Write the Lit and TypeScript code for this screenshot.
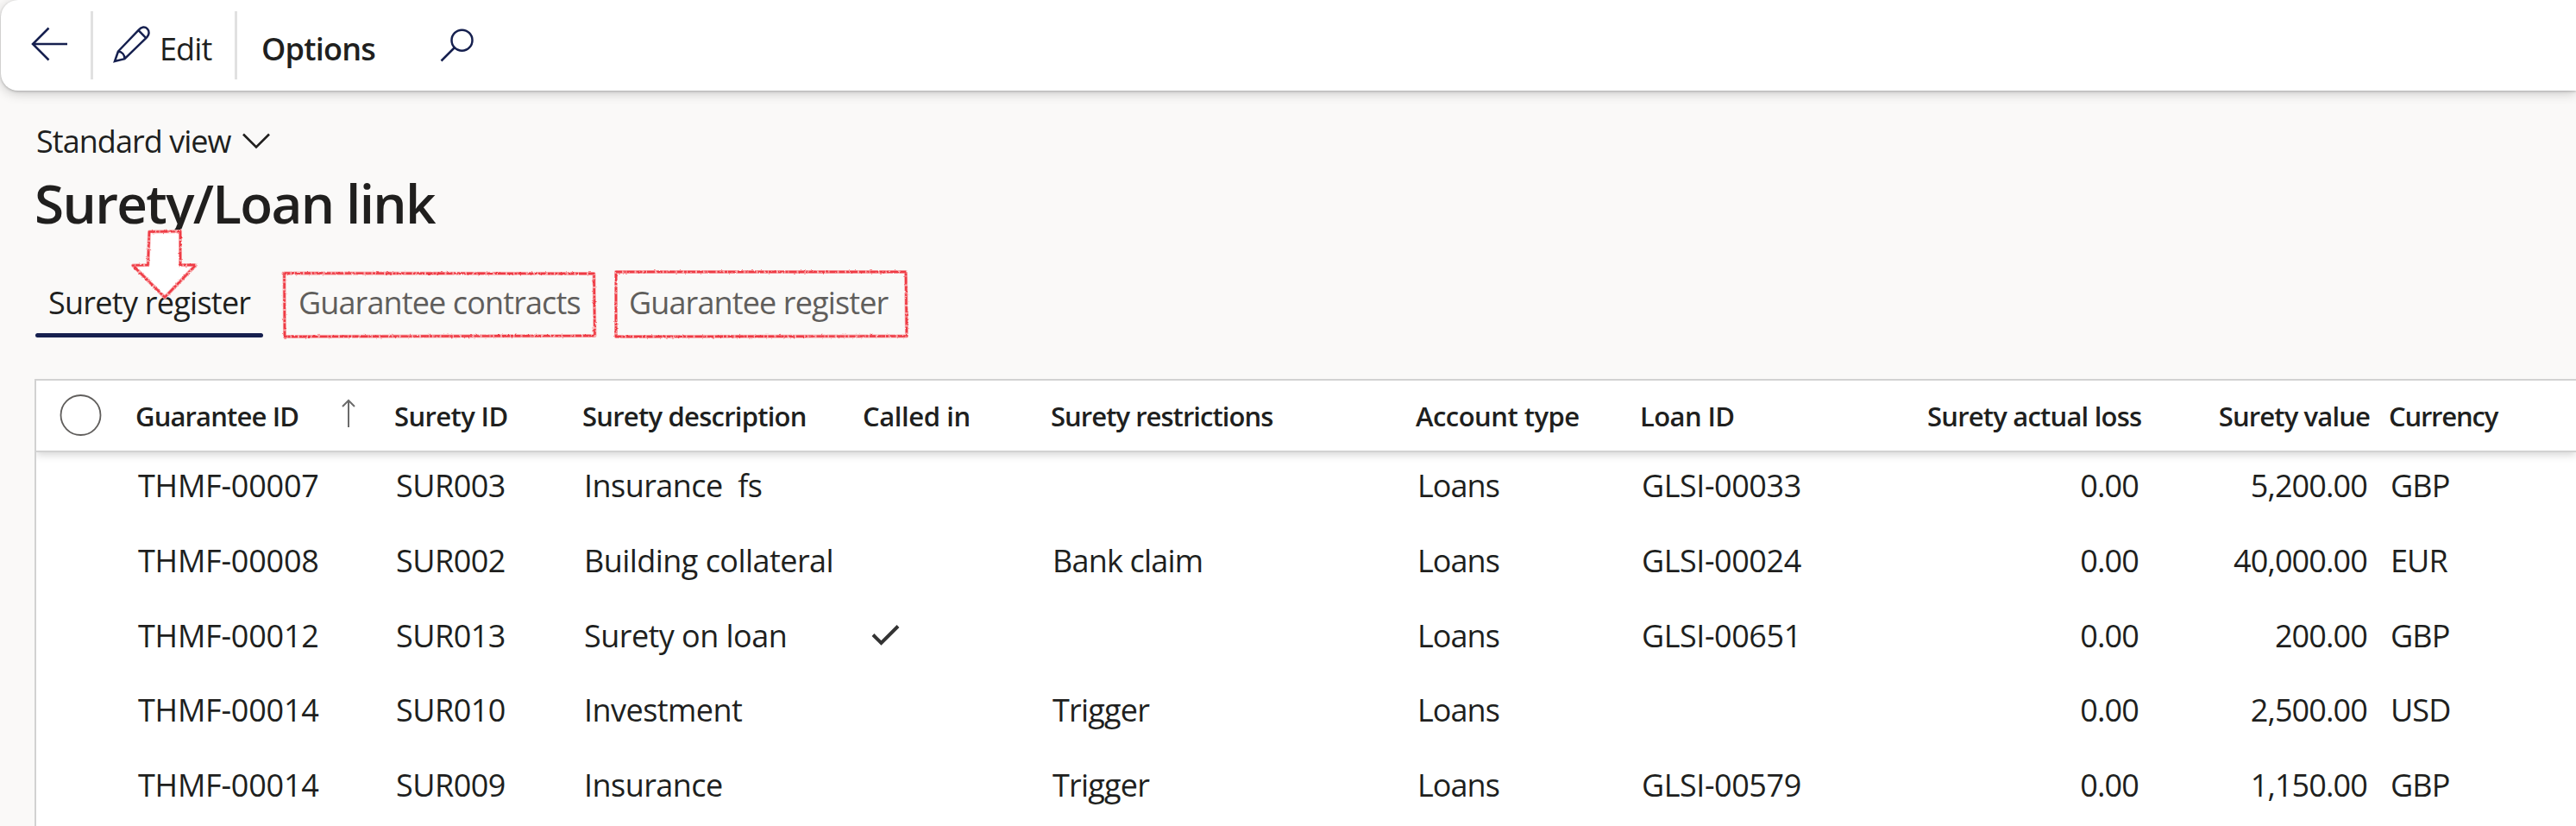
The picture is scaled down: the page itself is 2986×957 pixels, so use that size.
import { LitElement, html, css, svg, nothing } from "lit";

type Column = { key: string; title: string; cls: string };

const COLUMNS: Column[] = [
  { key: "guarantee", title: "Guarantee ID", cls: "guarantee" },
  { key: "surety", title: "Surety ID", cls: "surety" },
  { key: "description", title: "Surety description", cls: "description" },
  { key: "called", title: "Called in", cls: "called" },
  { key: "restrictions", title: "Surety restrictions", cls: "restrictions" },
  { key: "account", title: "Account type", cls: "account" },
  { key: "loan", title: "Loan ID", cls: "loan" },
  { key: "loss", title: "Surety actual loss", cls: "loss" },
  { key: "value", title: "Surety value", cls: "value" },
  { key: "currency", title: "Currency", cls: "currency" },
];

const row = (
  guarantee: string, surety: string, description: string, called: boolean,
  restrictions: string, loan: string, value: string, currency: string,
) => ({ guarantee, surety, description, called, restrictions, account: "Loans", loan, loss: "0.00", value, currency });

const ROWS: Record<string, string | boolean>[] = [
  row("THMF-00007", "SUR003", "Insurance  fs", false, "", "GLSI-00033", "5,200.00", "GBP"),
  row("THMF-00008", "SUR002", "Building collateral", false, "Bank claim", "GLSI-00024", "40,000.00", "EUR"),
  row("THMF-00012", "SUR013", "Surety on loan", true, "", "GLSI-00651", "200.00", "GBP"),
  row("THMF-00014", "SUR010", "Investment", false, "Trigger", "", "2,500.00", "USD"),
  row("THMF-00014", "SUR009", "Insurance", false, "Trigger", "GLSI-00579", "1,150.00", "GBP"),
];

class CommandBar extends LitElement {
  static styles = css`
    :host { display: block; position: relative; z-index: 1; }
    .bar {
      display: flex; align-items: flex-start; height: 105px; margin-left: 1px;
      background: #fff; border-radius: 20px 0 0 20px; color: #201f1e;
      box-shadow: 0 3px 14px rgba(0, 0, 0, 0.2), 0 1px 3px rgba(0, 0, 0, 0.22);
      font-size: 36px; line-height: 114px; white-space: pre;
    }
    svg { display: block; flex: none; fill: none; stroke: #16204f; stroke-width: 2.5; }
    .back { margin: 28px 25px 0 35px; }
    .sep { flex: none; width: 3px; height: 79px; margin-top: 13px; background: #e1e1e1; }
    .pencil { margin: 28px 9px 0 22px; }
    .edit { width: 87px; letter-spacing: -0.9px; }
    .options { width: 205px; padding-left: 28px; font-weight: 600; letter-spacing: -0.75px; }
    .search { margin-top: 30px; }
  `;
  render() {
    return html`<div class="bar">
      <svg class="back" width="44" height="46" viewBox="36 28 44 46"><path d="M56.500 32.500 38 51 56.500 69.500M38 51H78"/></svg>
      <div class="sep"></div>
      <svg class="pencil" width="46" height="46" viewBox="130 28 46 46">
        <path d="M137 59.500 161.300 34.200C164 31.200 168 30.600 170.800 33.300 173.500 36 173 40.300 170.300 43.200L144.500 68.200 133 71Z M160.500 35.200 169.300 44.200 M137 59.500C141.500 60 144.500 63.500 144.500 68.200"/>
      </svg>
      <span class="edit">Edit</span>
      <div class="sep"></div>
      <span class="options">Options</span>
      <svg class="search" width="44" height="44" viewBox="508 30 44 44"><circle cx="535.500" cy="46.700" r="12"/><path d="M526.500 55.500 511.500 70.500"/></svg>
    </div>`;
  }
}
customElements.define("command-bar", CommandBar);

class TabStrip extends LitElement {
  static styles = css`
    :host { display: block; }
    .tabs { display: flex; height: 71px; font-size: 36px; line-height: 62px; color: #605e5c; white-space: pre; }
    .tab { box-sizing: border-box; padding-left: 15px; letter-spacing: -0.88px; }
    .active { width: 264px; margin-right: 26px; color: #201f1e; letter-spacing: -0.74px; }
    .active::after { content: ""; display: block; height: 5px; margin: 4px 0 0 -15px; border-radius: 3px; background: #16204f; }
    .contracts { width: 361px; margin-right: 22px; }
  `;
  render() {
    return html`<div class="tabs">
      <div class="tab active">Surety register</div>
      <div class="tab contracts">Guarantee contracts</div>
      <div class="tab">Guarantee register</div>
    </div>`;
  }
}
customElements.define("tab-strip", TabStrip);

class SuretyGrid extends LitElement {
  static styles = css`
    :host { display: block; }
    .grid { height: 516px; border: solid #d2d2d2; border-width: 2px 0 0 2px; background: #fff; color: #201f1e; }
    .line {
      display: grid; white-space: pre;
      grid-template-columns: 115px 300px 218px 325px 218px 423px 260px 333px 248px 265px 1fr;
    }
    .head {
      height: 81px; line-height: 83px; font-size: 31px; font-weight: 600;
      border-bottom: 2px solid #d2d2d2; box-shadow: 0 3px 9px rgba(0, 0, 0, 0.17); clip-path: inset(0 0 -20px 0);
    }
    .row { height: 86.75px; line-height: 78px; font-size: 36px; }
    .cell { min-width: 0; }
    .row .cell { padding-left: 2px; }
    .pick, .arrow, .check { display: block; fill: none; }
    .pick { margin: 16px 0 0 27px; stroke: #605e5c; stroke-width: 1.8; }
    .guarantee { display: flex; }
    .arrow { margin: 21px 0 0 50px; stroke: #6b6b6b; stroke-width: 2; }
    .check { margin: 24px 0 0 7px; stroke: #333; stroke-width: 4; }
    .head .guarantee { letter-spacing: -0.86px; }
    .head .surety { letter-spacing: -0.62px; }
    .head .description { letter-spacing: -0.76px; }
    .head .called { letter-spacing: -0.4px; }
    .head .restrictions { letter-spacing: -0.96px; }
    .head .account { letter-spacing: -0.52px; }
    .head .loan { letter-spacing: -0.6px; }
    .head .loss { letter-spacing: -0.8px; }
    .head .value { letter-spacing: -0.87px; }
    .head .currency { letter-spacing: -1.2px; }
    .row .guarantee { letter-spacing: -0.22px; padding-left: 3px; }
    .row .surety { letter-spacing: -0.5px; }
    .row .description { letter-spacing: -0.55px; }
    .row .restrictions { letter-spacing: -0.8px; }
    .row .account { letter-spacing: -0.95px; }
    .row .loan { letter-spacing: -0.45px; }
    .row .loss, .row .value { letter-spacing: -0.88px; padding-right: 3px; }
    .loss, .value { text-align: right; }
    .loss { grid-column: 9; }
    .head .currency { padding-left: 22px; }
    .row .currency { padding-left: 24px; letter-spacing: -0.9px; }
  `;
  cell(col: Column, value: string | boolean) {
    if (col.key !== "called") return value;
    return value
      ? html`<svg class="check" width="36" height="26" viewBox="1009 721 36 26"><path d="M1012 734.500 1021.500 744 1041 724.500"/></svg>`
      : nothing;
  }
  render() {
    return html`<div class="grid">
      <div class="line head">
        <svg class="pick" width="50" height="50" viewBox="0 0 50 50"><circle cx="24.500" cy="24" r="23"/></svg>
        ${COLUMNS.map((c) => html`<div class="cell ${c.cls}"><span>${c.title}</span>${c.key === "guarantee"
          ? html`<svg class="arrow" width="16" height="34" viewBox="0 0 16 34"><path d="M8 33V2M1 9 8 2 15 9"/></svg>`
          : nothing}</div>`)}
      </div>
      ${ROWS.map((r) => html`<div class="line row">
        <div></div>${COLUMNS.map((c) => html`<div class="cell ${c.cls}">${this.cell(c, r[c.key])}</div>`)}
      </div>`)}
    </div>`;
  }
}
customElements.define("surety-grid", SuretyGrid);

const MARKS = [
  "M329.500 316.500 688.500 317 689.500 389 330 390Z",
  "M714 315 1050 315 1051 389.500 714 390Z",
];
const ARROW = "M173 268.500 209 268V307H227L191 344.500 154 307.500 171.500 307Z";

class AppRoot extends LitElement {
  static styles = css`
    :host {
      display: block; position: relative; height: 957px; overflow: hidden;
      background: #faf9f8; color: #201f1e; font-family: "Open Sans", "Noto Sans", sans-serif;
    }
    .page { padding: 28px 0 0 41px; }
    .view { display: flex; align-items: flex-start; height: 60px; padding-left: 1px; font-size: 36px; line-height: 62px; letter-spacing: -0.96px; }
    .chevron { display: block; margin: 20px 0 0 13px; fill: none; stroke: #201f1e; stroke-width: 2.6; }
    .title { margin: 2px 0 45px -1px; font-size: 62px; font-weight: 600; line-height: 80px; letter-spacing: -1.65px; }
    .grid { margin: 48px 0 0 -1px; }
    .marks { position: absolute; left: 0; top: 0; z-index: 2; pointer-events: none; stroke-linejoin: round; }
    .wash { fill: none; stroke: #f9a9ab; stroke-width: 4; }
    .ink { fill: none; stroke: #ee3a44; stroke-width: 2.4; stroke-dasharray: 7 1.5 3 1 9 2; }
    .arrow { fill: #fff; }
  `;
  render() {
    return html`
      <command-bar></command-bar>
      <div class="page">
        <div class="view"><span>Standard view</span>
          <svg class="chevron" width="34" height="20" viewBox="282 152 34 20"><path d="M284 154.500 299 169.500 314 154.500"/></svg>
        </div>
        <div class="title">Surety/Loan link</div>
        <tab-strip></tab-strip>
        <surety-grid class="grid"></surety-grid>
      </div>
      <svg class="marks" width="1080" height="420" viewBox="0 0 1080 420">
        <filter id="rough" x="-5%" y="-5%" width="110%" height="110%">
          <feTurbulence type="fractalNoise" baseFrequency="0.35" numOctaves="2" seed="4"/>
          <feDisplacementMap in="SourceGraphic" scale="2.500" xChannelSelector="R" yChannelSelector="G"/>
        </filter>
        <path class="arrow" d=${ARROW}/>
        <g filter="url(#rough)">
          ${[...MARKS, ARROW].map((d) => svg`<path class="wash" d=${d}/><path class="ink" d=${d}/>`)}
        </g>
      </svg>`;
  }
}
customElements.define("app-root", AppRoot);
